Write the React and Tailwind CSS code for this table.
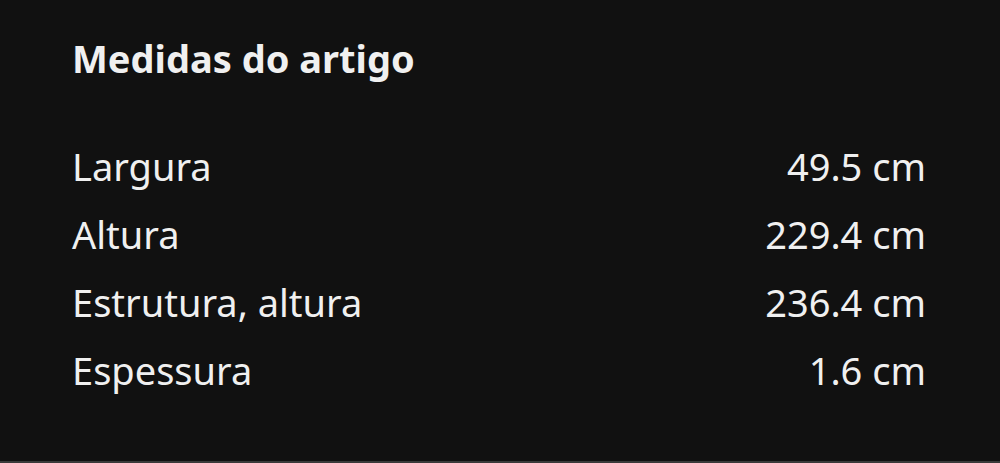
const ROWS = [
  ['Largura', '49.5 cm'],
  ['Altura', '229.4 cm'],
  ['Estrutura, altura', '236.4 cm'],
  ['Espessura', '1.6 cm'],
];

export default function App() {
  return (
    <div
      className="h-[463px] w-[1000px] bg-[#111111] border-b-2 border-[#3a3a3a] text-[#f0f0f0] pl-[72px] pr-[74px] pt-[28px]"
      style={{ fontFamily: '"Noto Sans", sans-serif' }}
    >
      <h2 className="text-[38px] font-bold leading-[60px]">Medidas do artigo</h2>
      <div className="mt-[44px]">
        {ROWS.map(([label, value]) => (
          <div key={label} className="flex justify-between text-[38px] leading-[68px]">
            <span>{label}</span>
            <span>{value}</span>
          </div>
        ))}
      </div>
    </div>
  );
}
